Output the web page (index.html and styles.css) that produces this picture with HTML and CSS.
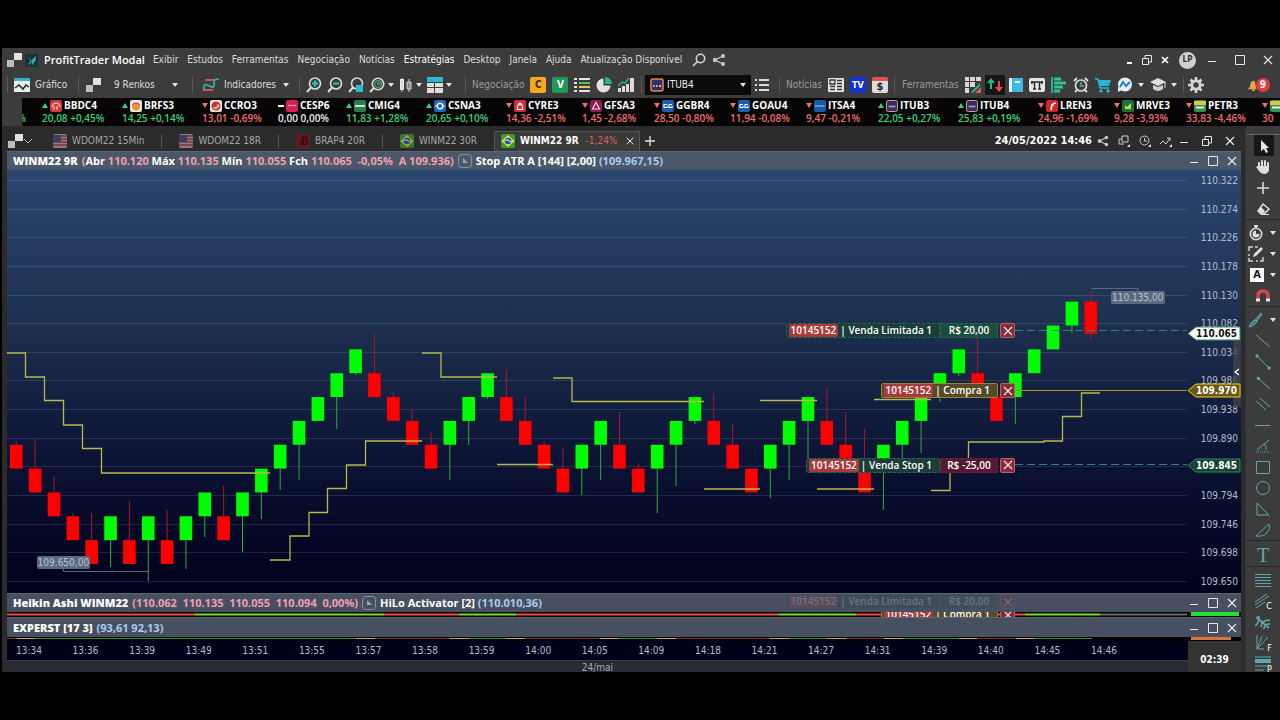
FILE: index.html
```html
<!DOCTYPE html>
<html lang="pt-BR">
<head>
  <meta charset="UTF-8" />
  <meta name="viewport" content="width=device-width, initial-scale=1.0" />
  <title>ProfitTrader Modal</title>
  <link rel="stylesheet" href="styles.css">
</head>
<body>
  <!-- shared icons -->
  <svg width="0" height="0" class="defs" aria-hidden="true">
    <symbol id="caret" viewBox="0 0 6 4"><path d="M0 0h6L3 4z" fill="#e4e4e4"/></symbol>
    <symbol id="squares" viewBox="0 0 16 16"><path d="M8 1h8v7H8z" fill="#e2e2e2"/><path d="M1 8h7v7H1z" fill="#bdbdbd"/></symbol>
    <symbol id="min" viewBox="0 0 12 12"><path d="M2 7.500h8" stroke="#e8e8e8"/></symbol>
    <symbol id="max" viewBox="0 0 12 12"><path d="M1.500 1.500h9v9h-9z" stroke="#e8e8e8" fill="none"/></symbol>
    <symbol id="restore" viewBox="0 0 12 12"><path d="M1.500 4.500h6v6h-6zM4 4V1.500h6.500v6.500H8" stroke="#e8e8e8" fill="none"/></symbol>
    <symbol id="close" viewBox="0 0 12 12"><path d="M2 2l8 8M10 2l-8 8" stroke="#e8e8e8" stroke-width="1.200"/></symbol>
    <symbol id="share" viewBox="0 0 14 14"><path d="M11 3L3 7l8 4" stroke="#c8c8c8" fill="none" stroke-width="1.300"/><g fill="#c8c8c8"><circle cx="11" cy="3" r="2"/><circle cx="3" cy="7" r="2.200"/><circle cx="11" cy="11" r="2"/></g></symbol>
    <symbol id="usa" viewBox="0 0 14 14"><rect width="14" height="14" rx="2" fill="#b9a3a3"/><path d="M0 2h14M0 5h14M0 8h14M0 11h14" stroke="#a2383d" stroke-width="1.500"/><path d="M0 1h8v7H0z" fill="#394a7d"/></symbol>
    <symbol id="brazil" viewBox="0 0 14 14"><rect width="14" height="14" rx="2" fill="#3b9b34"/><path d="M7 1l6.500 6L7 13 .5 7z" fill="#e9dc3b"/><circle cx="7" cy="7" r="3.300" fill="#2456a5"/><path d="M4 6q3-1 6 2" stroke="#fff" fill="none"/></symbol>
    <symbol id="tool" viewBox="0 0 14 14"><rect x=".5" y=".5" width="13" height="13" rx="3" fill="none" stroke="#8793a5"/><path d="M5 4v5h5z" fill="#9aa5b4"/></symbol>
    <symbol id="itau" viewBox="0 0 14 14"><rect x="1" y="1" width="12" height="12" rx="2" fill="#2b2e72" stroke="#e8894a" stroke-width="1.500"/><path d="M3 8h1.500M6 8h1.500M9 8h2" stroke="#e9c24d" stroke-width="2"/></symbol>
    <!-- company logos -->
    <symbol id="bradesco" viewBox="0 0 12 12"><rect width="12" height="12" rx="2" fill="#cf3a40"/><path d="M2 7q1-4 4-4t4 4M4 10V6M7 10V6" fill="none" stroke="#f6c9c9" stroke-width="1.200"/></symbol>
    <symbol id="brf" viewBox="0 0 12 12"><rect width="12" height="12" rx="2" fill="#efe6ea"/><circle cx="6" cy="6.500" r="4" fill="#f0982c"/><path d="M2 5q4-4 8 0" fill="none" stroke="#8d4aa0"/></symbol>
    <symbol id="ccr" viewBox="0 0 12 12"><rect width="12" height="12" rx="2" fill="#efe0da"/><circle cx="6" cy="6" r="4.500" fill="#bd3b30"/><path d="M3 8q5 0 5-4M5 9q4-1 4-4" fill="none" stroke="#f2ddd7"/></symbol>
    <symbol id="cesp" viewBox="0 0 12 12"><rect width="12" height="12" rx="2" fill="#d61f52"/><path d="M2 5.500h8" stroke="#f29ab3" stroke-width="1.300"/></symbol>
    <symbol id="cemig" viewBox="0 0 12 12"><rect width="12" height="12" rx="2" fill="#2c7f54"/><path d="M1 6h10" stroke="#c9e6d5" stroke-width="2"/></symbol>
    <symbol id="csn" viewBox="0 0 12 12"><rect width="12" height="12" rx="2" fill="#1b6bb8"/><circle cx="6" cy="6" r="2.800" fill="none" stroke="#fff" stroke-width="1.400"/><path d="M1 6h2M9 6h2" stroke="#fff"/></symbol>
    <symbol id="cyrela" viewBox="0 0 12 12"><rect width="12" height="12" rx="2" fill="#d32f38"/><path d="M3.500 6v3.500h5V6M4 5q2-4 4 0z" fill="none" stroke="#fff" stroke-width="1.200"/></symbol>
    <symbol id="gafisa" viewBox="0 0 12 12"><rect width="12" height="12" rx="2" fill="#8c1c58"/><path d="M6 2.500L9.500 9h-7z" fill="none" stroke="#f0d3e2" stroke-width="1.200"/></symbol>
    <symbol id="gerdau" viewBox="0 0 12 12"><rect width="12" height="12" rx="2" fill="#1d5fae"/><path d="M5 4.500H2v3h3V6M10 4.500H7v3h3V6" fill="none" stroke="#fff" stroke-width="1.100"/></symbol>
    <symbol id="itausa" viewBox="0 0 12 12"><rect width="12" height="12" rx="2" fill="#155da8"/><path d="M1 6h10" stroke="#8dbbe6" stroke-width="1.300" stroke-dasharray="1.500 .5"/></symbol>
    <symbol id="unibanco" viewBox="0 0 12 12"><rect x=".5" y=".5" width="11" height="11" rx="2" fill="#352c68" stroke="#d79a78"/><path d="M2.500 6.500h7" stroke="#9c8fba" stroke-width="2"/></symbol>
    <symbol id="renner" viewBox="0 0 12 12"><rect width="12" height="12" rx="2" fill="#d6242f"/><path d="M5 10l1-6M6 6q1-3 4-3" fill="none" stroke="#fff" stroke-width="1.600"/></symbol>
    <symbol id="mrv" viewBox="0 0 12 12"><rect width="12" height="12" rx="2" fill="#17743f"/><path d="M3 9V5l2 2 4-4v6z" fill="#d9cf3a"/></symbol>
    <symbol id="petro" viewBox="0 0 12 12"><rect width="12" height="12" rx="2" fill="#2f9450"/><path d="M0 1h12v4H0z" fill="#e6c23c"/><path d="M2 7.500h8" stroke="#e8f4ea" stroke-width="2"/></symbol>
  </svg>

  <div class="app">
    <header class="menubar">
      <svg class="i16"><use href="#squares"/></svg>
      <svg class="logo" viewBox="0 0 14 14"><path fill="#14313c" d="M0 0h14v14H0z"/><path d="M2 2l4 5-3 5 5-4zM8 6l4-4-1 6-2 1 1 3-4-3z" fill="#35b8b4"/></svg>
      <strong class="brand">ProfitTrader Modal</strong>
      <nav>
        <a href="#">Exibir</a>
        <a href="#">Estudos</a>
        <a href="#">Ferramentas</a>
        <a href="#">Negociação</a>
        <a href="#">Notícias</a>
        <a href="#" class="current">Estratégias</a>
        <a href="#">Desktop</a>
        <a href="#">Janela</a>
        <a href="#">Ajuda</a>
        <a href="#">Atualização Disponível</a>
      </nav>
      <button class="find" aria-label="Buscar"><svg class="i14" viewBox="0 0 14 14"><circle cx="8.500" cy="5.500" r="4.200" fill="none" stroke="#d8d8d8" stroke-width="1.500"/><path d="M5.500 8.500L1 13" stroke="#d8d8d8" stroke-width="1.600"/></svg></button>
      <button aria-label="Compartilhar"><svg class="i14"><use href="#share"/></svg></button>
      <div class="inner-controls">
        <button aria-label="Minimizar"><svg class="i12" viewBox="0 0 12 12"><path d="M4 9h5" stroke="#fff" stroke-width="2"/></svg></button>
        <button aria-label="Restaurar"><svg class="i12"><use href="#restore"/></svg></button>
        <button aria-label="Fechar"><svg class="i12" viewBox="0 0 12 12"><path d="M3 3l6 6M9 3l-6 6" stroke="#fff" stroke-width="1.700"/></svg></button>
      </div>
      <button class="avatar">LP</button>
      <div class="window-controls">
        <button aria-label="Minimizar"><svg class="i12"><use href="#min"/></svg></button>
        <button aria-label="Maximizar"><svg class="i12"><use href="#max"/></svg></button>
        <button aria-label="Fechar"><svg class="i12"><use href="#close"/></svg></button>
      </div>
    </header>

    <div class="toolbar">
      <div class="group">
        <button><svg class="i16" viewBox="0 0 16 16"><path fill="#ececec" d="M0 1h16v14H0z"/><path fill="#2fb6c8" d="M0 1h16v3H0z"/><path d="M1 11l4-3 4 4 3-4 3 2" fill="none" stroke="#222" stroke-width="1.500"/></svg><span>Gráfico</span></button>
      </div>
      <div class="group renko">
        <svg class="i16"><use href="#squares"/></svg>
        <select aria-label="Periodicidade"><option>9 Renkos</option></select>
        <svg class="caret"><use href="#caret"/></svg>
      </div>
      <div class="group indicators">
        <button><svg class="i16" viewBox="0 0 16 16"><path d="M2 3h10M0 13h10" stroke="#d2544f" stroke-width="2"/><path d="M1 13V9q0-2 3-1t5 2q2 1 2-3V5q0-3 5-3" fill="none" stroke="#39aebb" stroke-width="1.700"/></svg><span>Indicadores</span></button>
        <svg class="caret"><use href="#caret"/></svg>
      </div>
      <div class="group zooms">
        <button aria-label="Ampliar"><svg class="i16" viewBox="0 0 16 16"><circle cx="9" cy="6.500" r="5.500" fill="none" stroke="#dcdcdc" stroke-width="1.600"/><path d="M5 10.500L1 15" stroke="#dcdcdc" stroke-width="2"/><path d="M9 3.500v6M6 6.500h6" stroke="#28bfd6" stroke-width="2"/></svg></button>
        <button aria-label="Reduzir"><svg class="i16" viewBox="0 0 16 16"><circle cx="9" cy="6.500" r="5.500" fill="none" stroke="#dcdcdc" stroke-width="1.600"/><path d="M5 10.500L1 15" stroke="#dcdcdc" stroke-width="2"/><path d="M6 6.500h6" stroke="#28bfd6" stroke-width="2"/></svg></button>
        <button aria-label="Zoom na área"><svg class="i16" viewBox="0 0 16 16"><circle cx="9" cy="6.500" r="5.500" fill="none" stroke="#dcdcdc" stroke-width="1.600"/><path d="M5 10.500L1 15" stroke="#dcdcdc" stroke-width="2"/><path d="M8 8h7v7H8z" fill="#28bfd6"/></svg></button>
        <button aria-label="Zoom por tempo"><svg class="i16" viewBox="0 0 16 16"><circle cx="9" cy="7" r="5.700" fill="none" stroke="#dcdcdc" stroke-width="1.600"/><path d="M5 11l-4 4" stroke="#dcdcdc" stroke-width="2"/><circle cx="9" cy="7" r="3.500" fill="none" stroke="#46b678"/><path d="M9 4.500V7h2.500" fill="none" stroke="#46b678" stroke-width="1.300"/></svg><svg class="caret"><use href="#caret"/></svg></button>
        <button aria-label="Tipo de gráfico"><svg class="i14" viewBox="0 0 14 14"><path d="M1 1h4v11H1z" fill="#e6e6e6"/><path d="M3 0v14M10 1v13" stroke="#d0d0d0"/><path d="M8 4h4v7H8z" fill="#8b8b8b" stroke="#d0d0d0"/></svg><svg class="caret"><use href="#caret"/></svg></button>
        <button aria-label="Layout"><svg class="i16" viewBox="0 0 16 16"><path d="M0 0h16v5H0z" fill="#2ab8cf"/><path d="M0 6h7v4H0zM8 6h8v4H8zM0 11h7v5H0zM8 11h8v5H8z" fill="#dedede"/></svg><svg class="caret"><use href="#caret"/></svg></button>
      </div>
      <div class="group trade">
        <span class="label">Negociação</span>
        <button class="buy">C</button>
        <button class="sell">V</button>
        <button aria-label="Ordens"><svg class="i16" viewBox="0 0 16 16"><path d="M0 2h3M0 6h3M0 10h3M0 14h3M5 2h11M5 14h11" stroke="#e4e4e4" stroke-width="2"/><path d="M5 6h11" stroke="#44c271" stroke-width="2"/><path d="M5 10h11" stroke="#e2cb42" stroke-width="2"/></svg></button>
        <button aria-label="Carteira"><svg class="i16" viewBox="0 0 16 16"><path d="M7.500 1.500v7h7a7 7 0 1 1-7-7z" fill="#e2e2e2"/><path d="M9 0a7 7 0 0 1 7 7H9z" fill="#25b879"/></svg></button>
        <button aria-label="Resultado"><svg class="i16" viewBox="0 0 16 16"><path d="M0 11h3v4H0zM4 9h3v6H4zM8 7h3v8H8zM12 1h4v14h-4z" fill="#dcdcdc"/><path d="M0 9l4-4 3 1 4-5" fill="none" stroke="#29b276" stroke-width="1.500"/></svg></button>
      </div>
      <div class="group asset">
        <label class="asset-box">
          <svg class="i14"><use href="#itau"/></svg>
          <select aria-label="Ativo"><option>ITUB4</option></select>
          <svg class="caret"><use href="#caret"/></svg>
        </label>
        <button aria-label="Lista"><svg class="i14" viewBox="0 0 14 14"><path d="M0 2h2M0 7h2M0 12h2M4 2h10M4 7h10M4 12h10" stroke="#dcdcdc" stroke-width="2"/></svg></button>
      </div>
      <div class="group news">
        <span class="label">Notícias</span>
        <button aria-label="Jornal"><svg class="i16" viewBox="0 0 16 16"><rect y="1" width="16" height="14" rx="1" fill="#e4e4e4"/><path d="M2 3h5v4H2zM9 3.500h5M9 6.500h5M2 9.500h5M2 12.500h5M9 9.500h5M9 12.500h5" fill="none" stroke="#333" stroke-width="1.300"/></svg></button>
        <button class="tv">TV</button>
        <button class="calendar">$</button>
      </div>
      <div class="group tools">
        <span class="label">Ferramentas</span>
        <button aria-label="Mosaico"><svg class="i16" viewBox="0 0 16 16"><path d="M0 0h4v4H0zM5 0h5v4H5zM11 0h5v4h-5zM0 5h4v5H0zM5 5h5v5H5zM0 11h4v5H0z" fill="#d8d8d8"/><path d="M6 15l9-9v3l-7 7z" fill="#2eb079"/><path d="M10 16l6-6v6z" fill="#e35757"/></svg></button>
        <button class="pressed" aria-label="Boleta"><svg class="i16" viewBox="0 0 16 16"><path d="M4 1l4 5H5v6H3V6H0z" fill="#22b983"/><path d="M12 15L8 10h3V4h2v6h3z" fill="#ef4c43"/></svg></button>
        <button aria-label="Livro"><svg class="i14" viewBox="0 0 14 14"><path d="M0 0h14v14H0z" fill="#3fb8e4"/><path d="M0 0h3v14H0z" fill="#e4f5fa"/><path d="M6 4h5" stroke="#fff" stroke-width="2"/></svg></button>
        <button aria-label="Times &amp; Trades"><svg class="i16" viewBox="0 0 16 16"><rect y="1" width="16" height="14" rx="2" fill="#e6e6e6"/><path d="M2 5h12M3 4v3M13 4v3M5.500 5v7M10.500 5v7M4 12h3M9 12h3" stroke="#2a2a2a" stroke-width="1.500"/></svg></button>
        <button aria-label="Volume"><svg class="i16" viewBox="0 0 16 16"><path d="M1 0v16" stroke="#27a9b8" stroke-width="2"/><path d="M3 2h7M3 14h6" stroke="#2fc38a" stroke-width="3"/><path d="M3 6h12M3 10h9" stroke="#2fc38a" stroke-width="3"/></svg></button>
        <button aria-label="Alarme"><svg class="i16" viewBox="0 0 16 16"><circle cx="8" cy="8.500" r="5.500" fill="none" stroke="#dcdcdc" stroke-width="1.700"/><path d="M1 4l3-3M15 4l-3-3M4 13l-2 2M12 13l2 2" stroke="#dcdcdc" stroke-width="1.800"/><path d="M8 5v4h3" fill="none" stroke="#39c184" stroke-width="1.500"/></svg></button>
        <button aria-label="Loja"><svg class="i16" viewBox="0 0 16 16"><path d="M0 2h3l2 9h9" fill="none" stroke="#29b5d3" stroke-width="1.500"/><path d="M4 3h12l-2 6H5z" fill="#29b5d3"/><circle cx="6" cy="14" r="1.700" fill="#29b5d3"/><circle cx="13" cy="14" r="1.700" fill="#29b5d3"/></svg></button>
        <button aria-label="Chat"><svg class="i16" viewBox="0 0 16 16"><circle cx="8" cy="7.500" r="7" fill="#e4eff9"/><path d="M1 10v5l4-2z" fill="#e4eff9"/><path d="M3 10l3-5 3 4 4-4" fill="none" stroke="#237ecf" stroke-width="2"/></svg><svg class="caret"><use href="#caret"/></svg></button>
        <button aria-label="Cursos"><svg class="i16" viewBox="0 0 16 16"><path d="M8 1l8 4-8 4-8-4z" fill="#dcdcdc"/><path d="M3 8l5 2 5-2v4q-5 4-10 0z" fill="#cfcfcf"/><path d="M15 5v6" stroke="#dcdcdc"/></svg><svg class="caret"><use href="#caret"/></svg></button>
      </div>
      <div class="group settings">
        <button aria-label="Configurações"><svg class="i16" viewBox="0 0 16 16"><circle cx="8" cy="8" r="4.200" fill="none" stroke="#d4d4d4" stroke-width="3"/><path d="M8 0v3M8 13v3M0 8h3M13 8h3M2.500 2.500l2 2M11.500 11.500l2 2M13.500 2.500l-2 2M4.500 11.500l-2 2" stroke="#d4d4d4" stroke-width="2.500"/></svg></button>
        <button class="bell" aria-label="Notificações"><svg class="i12" viewBox="0 0 12 14"><path d="M0 12q3-2 3-6 0-4 5-4l2 10z" fill="#e6a54a"/><path d="M5 13h3" stroke="#e6a54a" stroke-width="2"/></svg><span>9</span></button>
      </div>
    </div>

    <div class="ticker">
      <div class="quote up cut"><span>%</span></div>
      <div class="quote up"><b><svg class="i12"><use href="#bradesco"/></svg>BBDC4</b><span>20,08 +0,45%</span></div>
      <div class="quote up"><b><svg class="i12"><use href="#brf"/></svg>BRFS3</b><span>14,25 +0,14%</span></div>
      <div class="quote down"><b><svg class="i12"><use href="#ccr"/></svg>CCRO3</b><span>13,01 -0,69%</span></div>
      <div class="quote flat"><b><svg class="i12"><use href="#cesp"/></svg>CESP6</b><span>0,00 0,00%</span></div>
      <div class="quote up"><b><svg class="i12"><use href="#cemig"/></svg>CMIG4</b><span>11,83 +1,28%</span></div>
      <div class="quote up"><b><svg class="i12"><use href="#csn"/></svg>CSNA3</b><span>20,65 +0,10%</span></div>
      <div class="quote down"><b><svg class="i12"><use href="#cyrela"/></svg>CYRE3</b><span>14,36 -2,51%</span></div>
      <div class="quote down short"><b><svg class="i12"><use href="#gafisa"/></svg>GFSA3</b><span>1,45 -2,68%</span></div>
      <div class="quote down"><b><svg class="i12"><use href="#gerdau"/></svg>GGBR4</b><span>28,50 -0,80%</span></div>
      <div class="quote down"><b><svg class="i12"><use href="#gerdau"/></svg>GOAU4</b><span>11,94 -0,08%</span></div>
      <div class="quote down short"><b><svg class="i12"><use href="#itausa"/></svg>ITSA4</b><span>9,47 -0,21%</span></div>
      <div class="quote up"><b><svg class="i12"><use href="#unibanco"/></svg>ITUB3</b><span>22,05 +0,27%</span></div>
      <div class="quote up"><b><svg class="i12"><use href="#unibanco"/></svg>ITUB4</b><span>25,83 +0,19%</span></div>
      <div class="quote down"><b><svg class="i12"><use href="#renner"/></svg>LREN3</b><span>24,96 -1,69%</span></div>
      <div class="quote down short"><b><svg class="i12"><use href="#mrv"/></svg>MRVE3</b><span>9,28 -3,93%</span></div>
      <div class="quote down"><b><svg class="i12"><use href="#petro"/></svg>PETR3</b><span>33,83 -4,46%</span></div>
      <div class="quote down"><b><svg class="i12"><use href="#petro"/></svg></b><span>30</span></div>
    </div>

    <div class="workspace">
      <main class="desk">
        <div class="tabs">
          <button class="tab-menu" aria-label="Desktops"><svg class="i16"><use href="#squares"/></svg><svg class="i10" viewBox="0 0 10 10"><path d="M1 3l4 4 4-4" fill="none" stroke="#bbb"/></svg></button>
          <button class="tab"><svg class="i14"><use href="#usa"/></svg>WDOM22 15Min</button>
          <button class="tab"><svg class="i14"><use href="#usa"/></svg>WDOM22 18R</button>
          <button class="tab"><svg class="i14" viewBox="0 0 14 14"><rect width="14" height="14" rx="2" fill="#7e1218"/><path d="M3 10h3V4M7 3h3q2 1.500 0 3.500H7zM7 6.500h3q3 2 0 4H7z" fill="none" stroke="#2b0608" stroke-width="1.300"/></svg>BRAP4 20R</button>
          <button class="tab"><svg class="i14"><use href="#brazil"/></svg>WINM22 30R</button>
          <button class="tab active"><svg class="i14"><use href="#brazil"/></svg><b>WINM22 9R</b><span class="loss">-1,24%</span><svg class="i10"><use href="#close"/></svg></button>
          <button class="add" aria-label="Nova aba"><svg class="i12" viewBox="0 0 12 12"><path d="M6 1v10M1 6h10" stroke="#e4e4e4" stroke-width="1.300"/></svg></button>
          <time>24/05/2022 14:46</time>
          <div class="tab-tools">
            <button aria-label="Compartilhar"><svg class="i12" viewBox="0 0 14 14"><use href="#share"/></svg></button>
            <button aria-label="Janelas"><svg class="i12" viewBox="0 0 12 12"><path d="M4 1h6v6H4zM6 9H1V4h3" fill="none" stroke="#cfcfcf"/><path d="M12 9v3H9z" fill="#eee"/></svg></button>
            <button aria-label="Histórico"><svg class="i12" viewBox="0 0 12 12"><circle cx="5.500" cy="5.500" r="4.500" fill="none" stroke="#cfcfcf"/><path d="M5.500 3v3H8" fill="none" stroke="#cfcfcf"/><path d="M12 9v3H9z" fill="#eee"/></svg></button>
            <button aria-label="Estudos"><svg class="i12" viewBox="0 0 12 12"><path d="M0 9l3-3 3 3 4-6M7 3h3v3" fill="none" stroke="#cfcfcf"/><path d="M12 9v3H9z" fill="#eee"/></svg></button>
          </div>
          <div class="window-controls small">
            <button aria-label="Minimizar"><svg class="i12"><use href="#min"/></svg></button>
            <button aria-label="Restaurar"><svg class="i12"><use href="#restore"/></svg></button>
            <button aria-label="Fechar"><svg class="i12"><use href="#close"/></svg></button>
          </div>
        </div>

        <div class="panel-head main-head">
          <b>WINM22 9R</b>
          <span><i>(</i>Abr <i>110.120</i> Máx <i>110.135</i> Mín <i>110.055</i> Fch <i>110.065 &nbsp;-0,05% &nbsp;A 109.936)</i></span>
          <svg class="i14"><use href="#tool"/></svg>
          <span>Stop ATR A [144] [2,00] <em>(109.967,15)</em></span>
          <div class="window-controls panel-controls">
            <button aria-label="Minimizar"><svg class="i12"><use href="#min"/></svg></button>
            <button aria-label="Maximizar"><svg class="i12"><use href="#max"/></svg></button>
            <button aria-label="Fechar"><svg class="i12"><use href="#close"/></svg></button>
          </div>
        </div>

        <section class="chart">
          <svg id="plot" class="plot" viewBox="0 0 1180 423" preserveAspectRatio="none"></svg>
          <ol class="prices">
            <li>110.322</li>
            <li>110.274</li>
            <li>110.226</li>
            <li>110.178</li>
            <li>110.130</li>
            <li>110.082</li>
            <li>110.034</li>
            <li>109.986</li>
            <li>109.938</li>
            <li>109.890</li>
            <li></li>
            <li>109.794</li>
            <li>109.746</li>
            <li>109.698</li>
            <li>109.650</li>
          </ol>
          <span class="swing low">109.650,00</span>
          <span class="swing high">110.135,00</span>
          <div class="order limit"><span class="name"><b>10145152</b>| Venda Limitada 1</span><span class="value">R$ 20,00</span><button aria-label="Cancelar"><svg class="i12"><use href="#close"/></svg></button></div>
          <div class="order position"><span class="name"><b>10145152</b>| Compra 1</span><button aria-label="Fechar posição"><svg class="i12"><use href="#close"/></svg></button></div>
          <div class="order stop"><span class="name"><b>10145152</b>| Venda Stop 1</span><span class="value">R$ -25,00</span><button aria-label="Cancelar"><svg class="i12"><use href="#close"/></svg></button></div>
          <button class="collapse" aria-label="Recolher"><svg class="i10" viewBox="0 0 10 10"><path d="M7 2L3 5l4 3" fill="none" stroke="#fff" stroke-width="1.200"/></svg></button>
          <div class="mark last-price"><svg viewBox="0 0 54 15" preserveAspectRatio="none"><path d="M1 7.500L9 1h44v13H9z"/></svg>110.065</div>
          <div class="mark entry"><svg viewBox="0 0 54 15" preserveAspectRatio="none"><path d="M1 7.500L9 1h44v13H9z"/></svg>109.970</div>
          <div class="mark stop-price"><svg viewBox="0 0 54 15" preserveAspectRatio="none"><path d="M1 7.500L9 1h44v13H9z"/></svg>109.845</div>
        </section>

        <div class="panel-head">
          <b>Heikin Ashi WINM22</b>
          <span><i>(110.062 &nbsp;110.135 &nbsp;110.055 &nbsp;110.094 &nbsp;0,00%)</i></span>
          <svg class="i14"><use href="#tool"/></svg>
          <span>HiLo Activator [2] <em>(110.010,36)</em></span>
          <div class="order limit ghost"><span class="name"><b>10145152</b>| Venda Limitada 1</span><span class="value">R$ 20,00</span><button aria-label="Cancelar"><svg class="i12"><use href="#close"/></svg></button></div>
          <div class="window-controls panel-controls">
            <button aria-label="Minimizar"><svg class="i12"><use href="#min"/></svg></button>
            <button aria-label="Maximizar"><svg class="i12"><use href="#max"/></svg></button>
            <button aria-label="Fechar"><svg class="i12"><use href="#close"/></svg></button>
          </div>
        </div>
        <div class="strip">
          <svg id="heikin" viewBox="0 0 1234 5" preserveAspectRatio="none"></svg>
          <div class="order position"><span class="name"><b>10145152</b>| Compra 1</span><button aria-label="Fechar posição"><svg class="i12"><use href="#close"/></svg></button></div>
        </div>
        <div class="panel-head">
          <b>EXPERST [17 3]</b>
          <span><em>(93,61 92,13)</em></span>
          <div class="window-controls panel-controls">
            <button aria-label="Minimizar"><svg class="i12"><use href="#min"/></svg></button>
            <button aria-label="Maximizar"><svg class="i12"><use href="#max"/></svg></button>
            <button aria-label="Fechar"><svg class="i12"><use href="#close"/></svg></button>
          </div>
        </div>
        <div class="strip thin">
          <svg id="experst" viewBox="0 0 1234 4" preserveAspectRatio="none"></svg>
        </div>

        <footer class="timeline">
          <div class="hours">
            <span>13:34</span><span>13:36</span><span>13:39</span><span>13:49</span><span>13:51</span>
            <span>13:55</span><span>13:57</span><span>13:58</span><span>13:59</span><span>14:00</span>
            <span>14:05</span><span>14:09</span><span>14:18</span><span>14:21</span><span>14:27</span>
            <span>14:31</span><span>14:39</span><span>14:40</span><span>14:45</span><span>14:46</span>
          </div>
          <div class="day">24/mai</div>
          <div class="clock">02:39</div>
        </footer>
      </main>

      <aside class="palette">
        <div class="set">
          <button class="on" aria-label="Cursor"><svg class="i16" viewBox="0 0 16 16"><path d="M5 2v11l3-2 2 4 2-1-2-4h3z" fill="#e6e6e6"/></svg></button>
          <button aria-label="Mover"><svg class="i16" viewBox="0 0 16 16"><path d="M4 9V4M7 8V2M10 8V2M13 9V4" stroke="#dedede" stroke-width="2" stroke-linecap="round"/><path d="M3 7h11v4q-1 4-5 4-3 0-5-3L1 8z" fill="#dedede"/></svg></button>
          <button aria-label="Mira"><svg class="i16" viewBox="0 0 16 16"><path d="M8 2v12M2 8h12" stroke="#dedede" stroke-width="1.500"/></svg></button>
          <button aria-label="Borracha"><svg class="i16" viewBox="0 0 16 16"><path d="M8 3l6 5-5 5H6L3 10z" fill="none" stroke="#dedede" stroke-width="1.500"/><path d="M3 10l3-4 4 4-2 3H6z" fill="#dedede"/><path d="M6 13.500h8" stroke="#dedede"/></svg></button>
        </div>
        <div class="set">
          <button class="more" aria-label="Replay"><svg class="i16" viewBox="0 0 16 16"><circle cx="8" cy="9" r="5.700" fill="none" stroke="#dcdcdc" stroke-width="1.600"/><path d="M6 1h4M8 1v3" stroke="#dcdcdc" stroke-width="2"/><path d="M8 5.500V9h3.500A3.500 3.500 0 1 1 8 5.500z" fill="#dcdcdc"/></svg><svg class="caret"><use href="#caret"/></svg></button>
          <button class="more" aria-label="Editar"><svg class="i16" viewBox="0 0 16 16"><path d="M1 5V1h4M7 1h3M1 8v2M1 12v3h4M8 15h2M12 15h3v-4" fill="none" stroke="#cfcfcf" stroke-width="1.500"/><path d="M5 11l1-3 7-7 2 2-7 7z" fill="#dedede"/></svg><svg class="caret"><use href="#caret"/></svg></button>
          <button class="more" aria-label="Texto"><span class="letter">A</span><svg class="caret"><use href="#caret"/></svg></button>
          <button aria-label="Ímã"><svg class="i16" viewBox="0 0 16 16"><path d="M3 11V8q0-5 5-5t5 5v3" fill="none" stroke="#d6494d" stroke-width="3.500"/><path d="M1 12h4M11 12h4" stroke="#e4e4e4" stroke-width="3"/></svg></button>
        </div>
        <div class="set draw">
          <button class="more" aria-label="Pincel"><svg class="i16" viewBox="0 0 16 16"><path d="M7 8l6-7 1 1-5 7zM7 8L5 9q-2 1-4 6 5-1 7-4l1-2" fill="#3f7c84"/></svg><svg class="caret"><use href="#caret"/></svg></button>
          <button aria-label="Linha"><svg class="i16" viewBox="0 0 16 16"><path d="M1 2l14 12"/></svg></button>
          <button aria-label="Segmento"><svg class="i16" viewBox="0 0 16 16"><path d="M2 2l12 12"/><path d="M1 1h2v2H1zM13 13h2v2h-2z" fill="#66bcc6"/></svg></button>
          <button aria-label="Seta"><svg class="i16" viewBox="0 0 16 16"><path d="M2 2l13 12"/><path d="M2 2l3 1-2 2z" fill="#66bcc6"/></svg></button>
          <button aria-label="Canal"><svg class="i16" viewBox="0 0 16 16"><path d="M1 5l10 9M5 2l10 9"/></svg></button>
          <button aria-label="Linha horizontal"><svg class="i16" viewBox="0 0 16 16"><path d="M0 8.500h15"/></svg></button>
          <button aria-label="Ângulo"><svg class="i16" viewBox="0 0 16 16"><path d="M14 2L2 12M9 6q3 2 2 6"/><path d="M1 14h14" stroke-dasharray="1 1"/></svg></button>
          <button aria-label="Retângulo"><svg class="i16" viewBox="0 0 16 16"><path d="M1.500 2.500h13v12h-13z"/></svg></button>
          <button aria-label="Elipse"><svg class="i16" viewBox="0 0 16 16"><circle cx="8" cy="8" r="6.500"/></svg></button>
          <button aria-label="Triângulo"><svg class="i16" viewBox="0 0 16 16"><path d="M2 2v12h12z"/></svg></button>
          <button aria-label="Arco"><svg class="i16" viewBox="0 0 16 16"><path d="M1 14L14 2q2 5-2 9-4 4-11 3z"/></svg></button>
        </div>
        <div class="set text"><button>T</button></div>
        <div class="set draw">
          <button aria-label="Fibonacci"><svg class="i16" viewBox="0 0 16 16"><path d="M0 2.500h16M0 5.500h16M0 8.500h16M0 11.500h16M0 14.500h16"/></svg></button>
          <button class="sub"><svg class="i16" viewBox="0 0 16 16"><path d="M0 9L12 1M0 12L14 3M1 15l9-6"/></svg><small>C</small></button>
          <button aria-label="Arcos"><svg class="i16" viewBox="0 0 16 16"><path d="M1 3l13 11M4 2q0 8-4 10M9 15q0-5 6-5M6 13q0-7 9-7" stroke-width="1.700"/></svg></button>
          <button class="sub"><svg class="i16" viewBox="0 0 16 16"><path d="M2 0v14h7M2 14L13 2M2 14L7 1"/></svg><small>F</small></button>
          <button class="sub"><svg class="i16" viewBox="0 0 16 16"><path d="M0 1h16M0 10h12M0 14h9"/><path d="M0 5h16" stroke-width="4"/></svg><small>P</small></button>
        </div>
      </aside>
    </div>
  </div>

  <script>
    const plot = document.getElementById("plot");
    const STEP = 18.85;
    const BRICK = 23.85;

    // [brick level, wick tip]; negative level = falling brick
    const bricks = [
      [-5, 272], [-4, 269], [-3, 307], [-2, 343], [-1, 343], [2, 397], [-1, 331], [2, 411], [-1, 340], [2, 399],
      [3, 367], [-2, 316], [3, 382], [4, 349], [5, 320], [6, 310], [7, 251], [8, 259], [9, 205], [-8, 163],
      [-7, 221], [-6, 239], [-5, 262], [6, 310], [7, 275], [8, 229], [-7, 200], [-6, 227], [-5, 272], [-4, 277],
      [5, 325], [6, 310], [-5, 242], [-4, 293], [5, 343], [6, 316], [7, 254], [-6, 224], [-5, 254], [-4, 298],
      [5, 328], [6, 310], [7, 290], [-6, 218], [-5, 242], [-4, 259], [5, 340], [6, 290], [7, 283], [8, 232],
      [9, 206], [-8, 168], [-7, 227], [8, 254], [9, 203], [10, 179], [11, 163], [-11, 122]
    ];

    let out = "";
    for (let i = 0; i < 15; i++) {
      const y = Math.round(11 + i * 28.64) - 0.5;
      out += `<path class="grid" d="M0 ${y}H1180"/>`;
    }

    bricks.forEach(([level, tip], i) => {
      const up = level > 0;
      const last = i === bricks.length - 1;
      const x = 9.3 + i * STEP;
      const top = 394 - Math.abs(level) * BRICK;
      const height = last ? 32 : BRICK;
      const from = last ? 170 : up ? top + height : top;
      out += `<path class="${up ? "rise" : "fall"} wick" d="M${x} ${from}V${tip}"/>`;
      out += `<rect class="${up ? "rise" : "fall"}" x="${x - 6.3}" y="${top}" width="12.6" height="${height}"/>`;
    });

    const atr = [
      "M0 183H18.500V207H37.500V230.500H56.500V255H75.500V278.500H94.500V303H263",
      "M263 390H283V366H302V342.500H320.500V318.500H339.500V295H358.500V271H415",
      "M415 183H434V207H490", "M490 294.500H546", "M546 208H565V231.500H697", "M697 319H753",
      "M753 230.500H810", "M810 319H867", "M867 229.500H924",
      "M924 320.500H943V296H961.500V272H1037V271H1055.500V246.500H1074.500V223H1093"
    ];
    out += `<path class="atr" d="${atr.join("")}"/>`;
    out += `<path class="swing-line" d="M56.500 398V401.500H141M1084 118.500H1131V122"/>`;
    out += `<path class="limit-line" d="M1008 160.500H1180M1008 294.500H1180"/>`;
    out += `<path class="entry-line" d="M1008 220.500H1180"/>`;
    plot.innerHTML = out;

    // coloured runs: [end x, colour]
    function runs(id, y, width, list) {
      let x = 0;
      let svg = "";
      list.forEach(([end, colour]) => {
        svg += `<path d="M${x} ${y}H${end}" stroke="${colour}" stroke-width="${width}"/>`;
        x = end;
      });
      document.getElementById(id).innerHTML = svg;
    }
    const R = "#f0483c", G = "#6fe02c", T = "#b8a58a", M = "#7c3038", D = "#2c8f3a";
    runs("heikin", 2.5, 2, [[188, R], [377, G], [452, R], [509, G], [772, R], [849, G], [1018, R], [1093, G], [1180, "#6b6257"]]);
    runs("experst", 1.5, 1, [[10, M], [28, T], [349, D], [368, T], [443, M], [462, T], [499, D], [518, T], [593, M], [612, T], [650, D], [669, T], [763, M], [782, T], [820, D], [839, T], [877, M], [896, T], [952, D], [970, T], [1009, M], [1028, T], [1085, D]]);
  </script>
</body>
</html>
```

FILE: styles.css
```css
* {
  box-sizing: border-box;
}
body {
  margin: 0;
  height: 100vh;
  padding: 48px 0;
  background: #000;
  color: #dcdcdc;
  font-family: "DejaVu Sans Condensed", "Noto Sans", sans-serif;
  font-size: 10px;
  line-height: 14px;
  overflow: hidden;
}
button, select {
  margin: 0;
  padding: 0;
  border: 0;
  background: none;
  color: inherit;
  font: inherit;
  appearance: none;
}
button {
  display: flex;
  align-items: center;
  flex: none;
}
svg {
  display: block;
  flex: none;
}
a {
  color: inherit;
  text-decoration: none;
}
.defs {
  position: absolute;
}
.i10 { width: 10px; height: 10px; }
.i12 { width: 12px; height: 12px; }
.i14 { width: 14px; height: 14px; }
.i16 { width: 16px; height: 16px; }
.caret { width: 6px; height: 4px; }

.app {
  display: flex;
  flex-direction: column;
  height: 100%;
  border-left: 2px solid #000;
  background: #3c3c3c;
  overflow: hidden;
}

/* menu */
.menubar {
  display: flex;
  align-items: center;
  height: 24px;
  padding: 0 6px 0 4px;
  flex: none;
}
.menubar .logo {
  width: 13px;
  height: 13px;
  margin: 0 6px 0 3px;
}
.brand {
  color: #fff;
  font-family: "Open Sans", sans-serif;
  font-size: 11px;
  font-weight: 600;
}
.menubar nav {
  display: flex;
  gap: 9px;
  margin: 0 10px 0 8px;
}
.menubar .current {
  color: #fff;
}
.find {
  margin-right: 6px;
}
.inner-controls {
  display: flex;
  gap: 6px;
  margin-left: auto;
}
.avatar {
  justify-content: center;
  width: 17px;
  height: 17px;
  margin: 0 10px 0 8px;
  border-radius: 50%;
  background: #cfcfcf;
  color: #333;
  font-size: 8px;
  font-weight: bold;
}
.window-controls {
  display: flex;
  gap: 16px;
}

/* toolbar */
.toolbar {
  display: grid;
  grid-template-columns: 71px 114px 107px 166px 176px 138px 115px 289px 1fr;
  align-items: center;
  height: 26px;
  padding-left: 5px;
  flex: none;
}
.group {
  display: flex;
  align-items: center;
  height: 16px;
  gap: 6px;
  padding-left: 6px;
  border-left: 1px solid #5a5a5a;
}
.group button {
  gap: 5px;
}
.group .label {
  color: #9c9c9c;
}
.renko select {
  width: 52px;
  margin-left: 7px;
}
.indicators {
  padding-left: 10px;
  gap: 7px;
}
.zooms {
  gap: 5px;
}
.zooms button {
  gap: 3px;
}
.buy, .sell, .tv, .calendar {
  justify-content: center;
  width: 16px;
  height: 16px;
  border-radius: 2px;
  font-weight: bold;
}
.buy {
  background: #f5a81c;
  color: #3a2a00;
}
.sell {
  background: #219a57;
  color: #fff;
}
.tv {
  background: #1430d8;
  color: #fff;
  font-size: 9px;
}
.calendar {
  border-top: 4px solid #e2524f;
  background: #dcdcdc;
  color: #222;
  font-size: 11px;
}
.asset {
  padding-left: 3px;
  gap: 4px;
}
.asset-box {
  display: flex;
  align-items: center;
  gap: 3px;
  width: 106px;
  height: 20px;
  padding: 0 5px;
  background: #0b0b0b;
}
.asset-box select {
  flex: 1;
  color: #eee;
}
.tools {
  padding-left: 7px;
}
.tools .pressed {
  justify-content: center;
  width: 20px;
  height: 20px;
  margin: 0 -2px;
  background: #151515;
}
.settings {
  padding-left: 4px;
  padding-right: 10px;
  justify-content: space-between;
}
.group .bell {
  gap: 0;
}
.bell span {
  width: 14px;
  height: 14px;
  margin-left: -3px;
  border-radius: 50%;
  background: #e23c3c;
  color: #fff;
  font-weight: bold;
  text-align: center;
}

/* ticker */
.ticker {
  display: flex;
  gap: 16px;
  height: 28px;
  margin-left: 20px;
  background: #050505;
  font-family: "Open Sans", sans-serif;
  font-weight: 600;
  line-height: 13px;
  overflow: hidden;
  flex: none;
}
.quote {
  width: 64px;
  padding-top: 1px;
  flex: none;
  white-space: nowrap;
}
.quote b {
  display: flex;
  align-items: center;
  gap: 2px;
  height: 13px;
  color: #fff;
  font-weight: 700;
}
.quote b::before {
  content: "";
  border: 3px solid transparent;
  border-top-width: 0;
  border-bottom: 5px solid currentColor;
}
.quote span {
  display: block;
}
.up, .up b::before { color: #3fd07a; }
.down, .down b::before { color: #f26d6d; }
.down b::before {
  border-top: 5px solid currentColor;
  border-bottom-width: 0;
}
.flat { color: #eee; }
.flat b::before {
  width: 6px;
  border: 0;
  border-top: 2px solid #fff;
}
.down { width: 60px; }
.short { width: 56px; }
.flat { width: 52px; }
.cut {
  display: flex;
  align-items: flex-end;
  justify-content: flex-end;
  width: 4px;
  padding-bottom: 1px;
}

/* tabs */
.workspace {
  display: flex;
  flex: 1;
  min-height: 0;
}
.desk {
  display: flex;
  flex-direction: column;
  flex: 1;
  min-width: 0;
  padding: 4px 4px 0 5px;
  background: #2b2b2b;
}
.tabs {
  display: flex;
  align-items: center;
  height: 21px;
  color: #a8a8a8;
  flex: none;
}
.tab-menu {
  width: 29px;
}
.tab {
  gap: 5px;
  height: 14px;
  padding: 0 17px;
  border-left: 1px solid #555;
}
.tab-menu + .tab, .tab.active {
  border-left: 0;
}
.tab svg {
  opacity: .7;
}
.tab.active {
  height: 20px;
  padding: 0 4px 0 6px;
  border: 1px solid #555;
  border-bottom: 0;
  background: #3a3a3a;
}
.tab.active svg {
  opacity: 1;
}
.tab b {
  color: #fff;
}
.loss {
  margin: 0 3px 0 2px;
  color: #d86060;
}
.add {
  margin-left: 4px;
}
.tabs time {
  margin-left: auto;
  color: #fff;
  font-size: 11px;
  font-weight: bold;
}
.tab-tools {
  display: flex;
  gap: 9px;
  margin: 0 6px 0 5px;
}
.window-controls.small {
  gap: 11px;
  margin-right: 5px;
}

/* panels */
.panel-head {
  position: relative;
  display: flex;
  align-items: center;
  gap: 4px;
  height: 19px;
  padding: 0 3px 0 6px;
  border-top: 1px solid #5d6675;
  background: #475060;
  color: #fff;
  font-family: "Open Sans", sans-serif;
  font-size: 11px;
  font-weight: 700;
  white-space: nowrap;
  flex: none;
}
.strip + .panel-head {
  height: 20px;
}
.main-head {
  background: #4a5869;
}
.panel-head i {
  color: #f0a0b2;
  font-style: normal;
}
.panel-head em {
  color: #a9cdf2;
  font-style: normal;
}
.panel-controls {
  gap: 7px;
  margin-left: auto;
}
.chart {
  position: relative;
  display: flex;
  flex: 1;
  min-height: 0;
  background: linear-gradient(#2b466f, #1d3050 36%, #0b1233 70%, #00001b);
}
.plot {
  flex: 1;
  width: 0;
  height: 100%;
}
.grid { stroke: #8fa0c0; stroke-opacity: .2; }
.rise { fill: #00ff00; }
.fall { fill: #ff0000; }
.wick { stroke-width: 1; }
.rise.wick { stroke: #2fae36; }
.fall.wick { stroke: #b01624; }
.atr { fill: none; stroke: #b8b84a; stroke-width: 1.3; }
.swing-line { fill: none; stroke: #5d6880; }
.limit-line { stroke: #3b8069; stroke-dasharray: 8 4; }
.entry-line { stroke: #a8942a; }
.prices {
  display: flex;
  flex-direction: column;
  justify-content: space-between;
  width: 54px;
  margin: 0;
  padding: 4px 3px 4px 0;
  color: #b4bccb;
  list-style: none;
  text-align: right;
}
.prices li {
  height: 14px;
}
.swing {
  position: absolute;
  padding: 0 1px;
  border-radius: 2px;
  background: #5b6a80;
  color: #b9c4d2;
  line-height: 13px;
}
.low { left: 2.4%; bottom: 5.7%; }
.high { right: 6.2%; top: 28.6%; }

/* order tags */
.order {
  position: absolute;
  right: 226px;
  display: flex;
  height: 15px;
  color: #fff;
  font-family: "Open Sans", sans-serif;
  font-size: 10px;
  font-weight: 600;
  line-height: 13px;
  white-space: nowrap;
}
.order .name {
  display: flex;
  gap: 2px;
  padding: 0 7px 0 2px;
  border: 1px dashed #28684f;
  border-radius: 2px;
  background: #1b3d3a;
}
.order b {
  padding: 0 2px;
  border-radius: 2px;
  background: #a93a3c;
  font-weight: 600;
}
.order .value {
  min-width: 58px;
  border: 1px dashed #28684f;
  background: #1b4d3e;
  text-align: center;
}
.order button {
  justify-content: center;
  width: 15px;
  margin-left: 2px;
  border: 1px solid #b8606c;
  border-radius: 2px;
  background: #8c2a3a;
}
.limit { top: 36.2%; }
.position { top: 50.4%; }
.stop { top: 68%; }
.stop .value {
  border-color: #6b2234;
  background: #551a30;
}
.position .name {
  border: 1px solid #9a8632;
  background: #564b28;
}
.ghost {
  top: 0;
  opacity: .2;
}
.collapse {
  position: absolute;
  right: 0;
  top: 39.5%;
  justify-content: center;
  width: 8px;
  height: 70px;
  background: rgba(62, 66, 72, .8);
}
.mark {
  position: absolute;
  right: 0;
  z-index: 1;
  width: 54px;
  height: 15px;
  padding-right: 4px;
  color: #fff;
  font-weight: bold;
  line-height: 15px;
  text-align: right;
}
.mark svg {
  position: absolute;
  inset: 0;
  z-index: -1;
  width: 100%;
  height: 100%;
}
.last-price { top: 36.8%; color: #111; }
.last-price path { fill: #fff; stroke: #2c8a68; }
.entry { top: 50.4%; }
.entry path { fill: #6b5612; stroke: #f0d020; }
.stop-price { top: 68%; }
.stop-price path { fill: #124532; stroke: #2c8a5c; }

.strip {
  position: relative;
  height: 5px;
  background: #050508;
  overflow: hidden;
  flex: none;
}
.strip.thin {
  height: 4px;
}
.strip > svg {
  width: 100%;
  height: 100%;
}
.strip .order {
  top: -5px;
}
.strip::after {
  content: "";
  position: absolute;
  right: 2px;
  top: 0;
  width: 48px;
  height: 4px;
  background: #22e03a;
}
.strip.thin::after {
  right: 10px;
  width: 40px;
  height: 3px;
  background: #d8743c;
}

/* time axis */
.timeline {
  display: grid;
  grid-template-columns: 1fr 53px;
  grid-template-rows: 19px 12px;
  background: #00001b;
  overflow: hidden;
  flex: none;
}
.hours {
  display: flex;
  justify-content: space-between;
  align-items: center;
  padding: 0 71px 0 9px;
  color: #b8bcc6;
}
.day {
  grid-row: 2;
  border-top: 1px solid #3a3d46;
  background: #282a33;
  color: #a8acb5;
  text-align: center;
}
.clock {
  grid-column: 2;
  grid-row: 1 / 3;
  display: flex;
  align-items: center;
  justify-content: center;
  padding-top: 6px;
  background: #333;
  color: #fff;
  font-weight: bold;
}

/* drawing tools */
.palette {
  width: 35px;
  padding-top: 8px;
  border-left: 1px solid #333;
  background: #3c3c3c;
  flex: none;
}
.set {
  padding-top: 2px;
  border-top: 1px solid #262626;
}
.set:first-child {
  padding-top: 0;
  border-top-color: #666;
}
.set button {
  justify-content: center;
  width: 100%;
  height: 21px;
}
.set .more {
  justify-content: flex-end;
  gap: 6px;
  padding-right: 4px;
}
.set .on {
  width: 20px;
  margin-left: 8px;
  background: #171717;
}
.draw svg {
  fill: none;
  stroke: #5aa9b2;
}
.draw .caret {
  stroke: none;
}
.letter {
  width: 14px;
  height: 14px;
  background: #fff;
  color: #111;
  font-size: 11px;
  font-weight: bold;
}
.text button {
  height: 23px;
  color: #5aa9b2;
  font-family: "Liberation Serif", serif;
  font-size: 20px;
}
.sub {
  position: relative;
}
.sub small {
  position: absolute;
  right: 8px;
  bottom: 0;
  color: #fff;
  font-size: 9px;
  line-height: 9px;
}
```
